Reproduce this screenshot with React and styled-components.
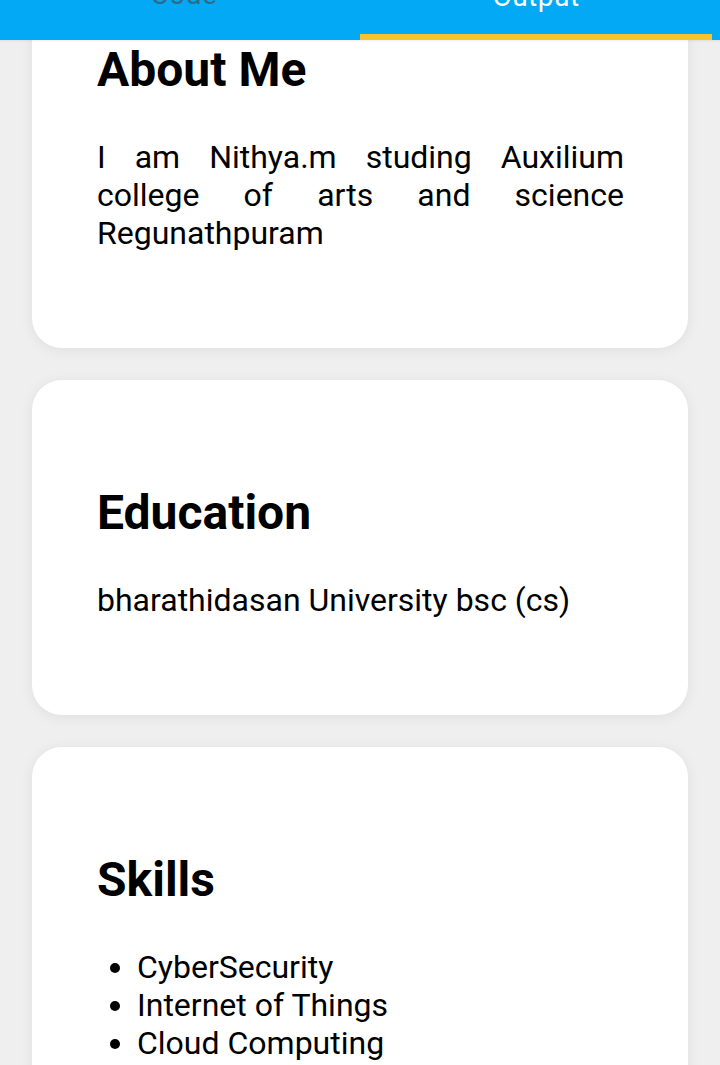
import React from "react";
import styled, { createGlobalStyle } from "styled-components";

const sections = [
  {
    title: "About Me",
    text: "I am Nithya.m studing Auxilium college of arts and science Regunathpuram",
  },
  {
    title: "Education",
    text: "bharathidasan University bsc (cs)",
  },
  {
    title: "Skills",
    list: ["CyberSecurity", "Internet of Things", "Cloud Computing"],
  },
];

const App = () => {
  return (
    <Screen>
      <GlobalStyle />
      <TabBar>
        <Tab>
          <TabLabel>Code</TabLabel>
        </Tab>
        <Tab active>
          <TabLabel active>Output</TabLabel>
        </Tab>
      </TabBar>
      <Feed>
        {sections.map(s => (
          <Card key={s.title}>
            <Heading>{s.title}</Heading>
            {s.text && <Body>{s.text}</Body>}
            {s.list && (
              <List>
                {s.list.map(item => (
                  <Item key={item}>{item}</Item>
                ))}
              </List>
            )}
          </Card>
        ))}
      </Feed>
    </Screen>
  );
};

const GlobalStyle = createGlobalStyle`
  html, body {
    margin: 0;
    padding: 0;
    background: #efefef;
  }
  body {
    font-family: Roboto, "Liberation Sans", sans-serif;
    color: #000;
  }
`;

const Screen = styled.div`
  position: relative;
  width: 720px;
  height: 1065px;
  overflow: hidden;
  background: #efefef;
`;

const TabBar = styled.div`
  position: absolute;
  top: 0;
  left: 0;
  right: 0;
  z-index: 2;
  height: 40px;
  display: grid;
  grid-template-columns: 360px 352px;
  background: #03a9f4;
  box-shadow: 0 1px 2px rgba(0, 0, 0, 0.08);
`;

const Tab = styled.div`
  position: relative;
  display: flex;
  justify-content: center;
  overflow: hidden;
  border-bottom: 6px solid ${props => (props.active ? "#f4c52c" : "transparent")};
`;

const TabLabel = styled.span`
  margin-top: ${props => (props.active ? "-20px" : "-22px")};
  margin-left: ${props => (props.active ? "0" : "8px")};
  font-size: 28px;
  line-height: 33px;
  letter-spacing: 0.5px;
  color: ${props => (props.active ? "#ffffff" : "#2f6a87")};
`;

const Feed = styled.div`
  display: flex;
  flex-direction: column;
  gap: 32px;
  margin-top: -63px;
  padding: 0 32px;
`;

const Card = styled.section`
  background: #fff;
  border-radius: 30px;
  padding: 64px 64px 64px 65px;
  box-shadow: 0 2px 14px rgba(0, 0, 0, 0.07);
  display: flow-root;
`;

const Heading = styled.h2`
  margin: 41px 0 40px;
  font-size: 48px;
  line-height: 56px;
  font-weight: 700;
`;

const Body = styled.p`
  margin: 32px 0;
  font-size: 32px;
  line-height: 38px;
  text-align: justify;
`;

const List = styled.ul`
  margin: 32px 0;
  padding-left: 40px;
  font-size: 32px;
  line-height: 38px;
`;

const Item = styled.li``;

export default App;
